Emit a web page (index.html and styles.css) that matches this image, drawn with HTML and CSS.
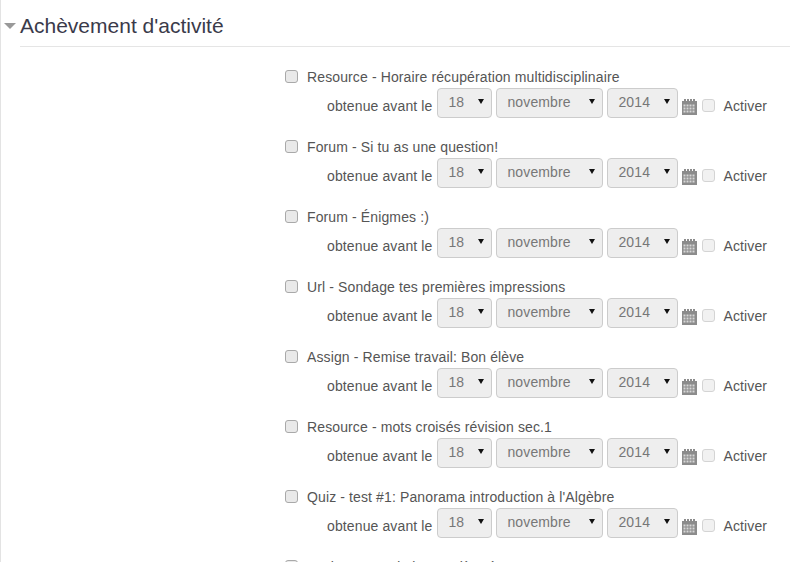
FILE: index.html
```html
<!DOCTYPE html>
<html lang="fr">
<head>
    <meta charset="UTF-8">
    <meta name="viewport" content="width=device-width, initial-scale=1.0">
    <title>Achèvement d'activité</title>
    <link rel="stylesheet" href="styles.css">
</head>
<body>

<svg width="0" height="0" class="defs">
    <symbol id="cal" viewBox="0 0 15 16">
        <path fill="#8c8c8c" d="M0 2h2V0h2v2h1V0h2v2h1V0h2v2h1V0h2v2h2v14H0z"/>
        <path fill="#fff" d="M1.500 5.500h2v2h-2zM4.500 5.500h2v2h-2zM7.500 5.500h2v2h-2zM10.500 5.500h2v2h-2zM1.500 8.500h2v2h-2zM4.500 8.500h2v2h-2zM7.500 8.500h2v2h-2zM10.500 8.500h2v2h-2zM1.500 11.500h2v2h-2zM4.500 11.500h2v2h-2zM7.500 11.500h2v2h-2zM10.500 11.500h2v2h-2z" opacity=".65"/>
    </symbol>
</svg>

<div class="section">
    <h2 class="section-title"><span class="caret"></span>Achèvement d'activité</h2>

    <div class="items">
        <div class="item">
            <label class="item-name"><input type="checkbox"> Resource - Horaire récupération multidisciplinaire</label>
            <div class="item-date">
                <span class="date-label">obtenue avant le</span>
                <span class="select day"><select disabled><option>18</option></select></span>
                <span class="select month"><select disabled><option>novembre</option></select></span>
                <span class="select year"><select disabled><option>2014</option></select></span>
                <svg class="cal"><use href="#cal"/></svg>
                <input type="checkbox" class="enable" disabled>
                <span class="enable-label">Activer</span>
            </div>
        </div>
        <div class="item">
            <label class="item-name"><input type="checkbox"> Forum - Si tu as une question!</label>
            <div class="item-date">
                <span class="date-label">obtenue avant le</span>
                <span class="select day"><select disabled><option>18</option></select></span>
                <span class="select month"><select disabled><option>novembre</option></select></span>
                <span class="select year"><select disabled><option>2014</option></select></span>
                <svg class="cal"><use href="#cal"/></svg>
                <input type="checkbox" class="enable" disabled>
                <span class="enable-label">Activer</span>
            </div>
        </div>
        <div class="item">
            <label class="item-name"><input type="checkbox"> Forum - Énigmes :)</label>
            <div class="item-date">
                <span class="date-label">obtenue avant le</span>
                <span class="select day"><select disabled><option>18</option></select></span>
                <span class="select month"><select disabled><option>novembre</option></select></span>
                <span class="select year"><select disabled><option>2014</option></select></span>
                <svg class="cal"><use href="#cal"/></svg>
                <input type="checkbox" class="enable" disabled>
                <span class="enable-label">Activer</span>
            </div>
        </div>
        <div class="item">
            <label class="item-name"><input type="checkbox"> Url - Sondage tes premières impressions</label>
            <div class="item-date">
                <span class="date-label">obtenue avant le</span>
                <span class="select day"><select disabled><option>18</option></select></span>
                <span class="select month"><select disabled><option>novembre</option></select></span>
                <span class="select year"><select disabled><option>2014</option></select></span>
                <svg class="cal"><use href="#cal"/></svg>
                <input type="checkbox" class="enable" disabled>
                <span class="enable-label">Activer</span>
            </div>
        </div>
        <div class="item">
            <label class="item-name"><input type="checkbox"> Assign - Remise travail: Bon élève</label>
            <div class="item-date">
                <span class="date-label">obtenue avant le</span>
                <span class="select day"><select disabled><option>18</option></select></span>
                <span class="select month"><select disabled><option>novembre</option></select></span>
                <span class="select year"><select disabled><option>2014</option></select></span>
                <svg class="cal"><use href="#cal"/></svg>
                <input type="checkbox" class="enable" disabled>
                <span class="enable-label">Activer</span>
            </div>
        </div>
        <div class="item">
            <label class="item-name"><input type="checkbox"> Resource - mots croisés révision sec.1</label>
            <div class="item-date">
                <span class="date-label">obtenue avant le</span>
                <span class="select day"><select disabled><option>18</option></select></span>
                <span class="select month"><select disabled><option>novembre</option></select></span>
                <span class="select year"><select disabled><option>2014</option></select></span>
                <svg class="cal"><use href="#cal"/></svg>
                <input type="checkbox" class="enable" disabled>
                <span class="enable-label">Activer</span>
            </div>
        </div>
        <div class="item">
            <label class="item-name"><input type="checkbox"> Quiz - test #1: Panorama introduction à l'Algèbre</label>
            <div class="item-date">
                <span class="date-label">obtenue avant le</span>
                <span class="select day"><select disabled><option>18</option></select></span>
                <span class="select month"><select disabled><option>novembre</option></select></span>
                <span class="select year"><select disabled><option>2014</option></select></span>
                <svg class="cal"><use href="#cal"/></svg>
                <input type="checkbox" class="enable" disabled>
                <span class="enable-label">Activer</span>
            </div>
        </div>
        <div class="item">
            <label class="item-name"><input type="checkbox"> Assign - Test de la première étape</label>
        </div>
    </div>
</div>

</body>
</html>
```

FILE: styles.css
```css
html, body {
    height: 100%;
    overflow: hidden;
}
body {
    margin: 0;
    font-family: "Liberation Sans", Arial, sans-serif;
    font-size: 14px;
    letter-spacing: 0.12px;
    color: #555;
    background-color: #fff;
    border-left: 1px solid #e3e3e3;
}
.defs {
    display: block;
    height: 0;
}
.section {
    padding-top: 14px;
}
.section-title {
    position: relative;
    margin: 0 0 0 19px;
    padding-bottom: 8px;
    font-size: 21px;
    font-weight: normal;
    line-height: 24px;
    letter-spacing: 0;
    color: #3a3a4a;
    border-bottom: 1px solid #e5e5e5;
}
.caret {
    position: absolute;
    left: -16px;
    top: 9px;
    border-left: 6px solid transparent;
    border-right: 6px solid transparent;
    border-top: 6px solid #999;
}
.items {
    padding: 20px 0 0 284px;
}
.item {
    height: 70px;
}
.item-name {
    display: flex;
    align-items: center;
    gap: 9px;
    height: 20px;
    line-height: 20px;
    white-space: nowrap;
}
.item-name input,
.enable {
    appearance: none;
    width: 13px;
    height: 13px;
    margin: 0;
    flex: none;
    background-color: #e9e9e9;
    border: 1px solid #a9a9a9;
    border-radius: 3px;
}
.item-name input {
    position: relative;
    top: -1px;
}
.item-date {
    display: flex;
    align-items: center;
    height: 30px;
    margin-top: 1px;
    padding-left: 42px;
}
.date-label {
    margin-right: 5px;
    position: relative;
    top: 3px;
}
.select {
    display: block;
    position: relative;
    height: 30px;
    margin-right: 4px;
}
.select::after {
    content: "";
    position: absolute;
    right: 8px;
    top: 11px;
    border-left: 3px solid transparent;
    border-right: 3px solid transparent;
    border-top: 5px solid #111;
}
.select select {
    appearance: none;
    display: block;
    width: 100%;
    height: 30px;
    padding: 0 0 2px 10px;
    font-family: inherit;
    font-size: 14px;
    letter-spacing: inherit;
    color: #777;
    opacity: 1;
    background-color: #eee;
    border: 1px solid #ccc;
    border-radius: 4px;
}
.day {
    width: 55px;
}
.month {
    width: 107px;
}
.year {
    width: 71px;
}
.cal {
    width: 15px;
    height: 16px;
    position: relative;
    top: 4px;
}
.enable {
    margin-left: 5px;
    background-color: #f1f1f1;
    border-color: #d4d4d4;
    position: relative;
    top: 2px;
}
.enable-label {
    margin-left: 8px;
    position: relative;
    top: 3px;
}
```
